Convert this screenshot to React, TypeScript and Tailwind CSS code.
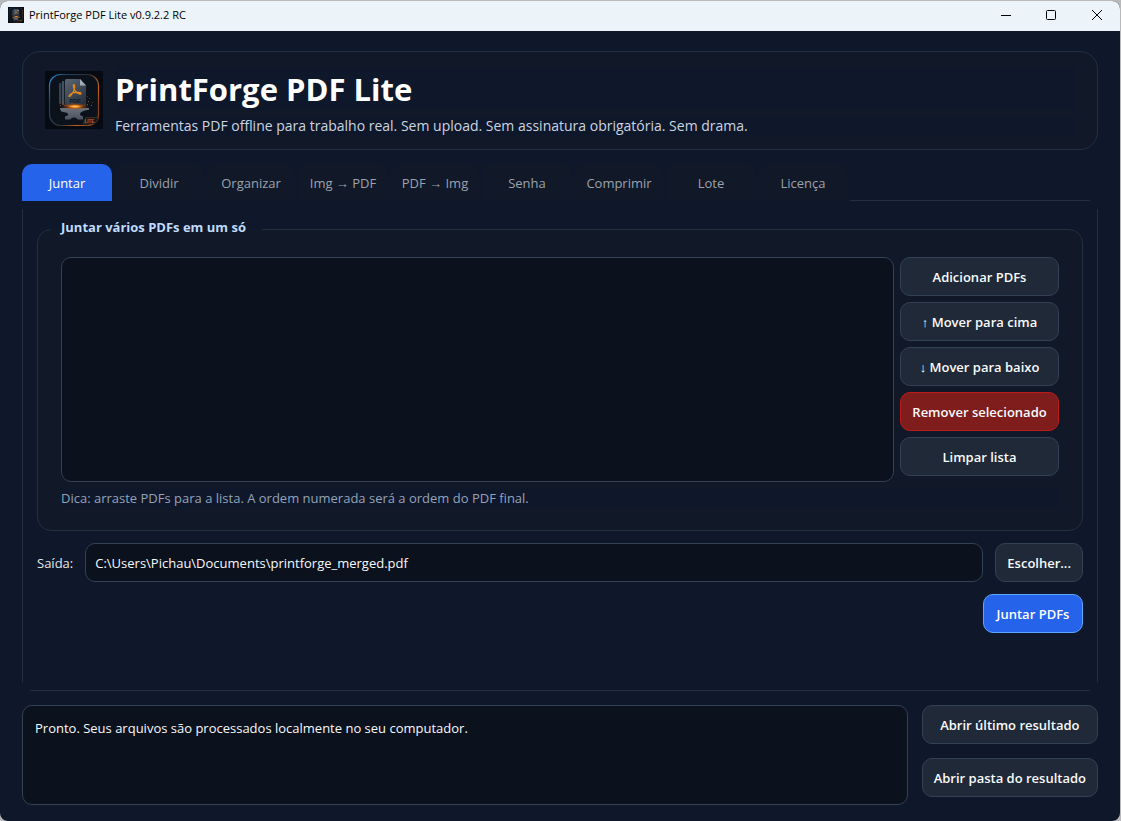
import React, { useState } from 'react'
import clsx from 'clsx'

const TABS = [
  'Juntar',
  'Dividir',
  'Organizar',
  'Img → PDF',
  'PDF → Img',
  'Senha',
  'Comprimir',
  'Lote',
  'Licença',
]

// ---------------------------------------------------------------------------
// Logo
// ---------------------------------------------------------------------------

function Logo({ id, className }: { id: string; className?: string }) {
  return (
    <svg viewBox="0 0 58 58" className={className} aria-hidden="true">
      <defs>
        <linearGradient id={`${id}-ring`} x1="0" y1="0" x2="1" y2="0.6">
          <stop offset="0" stopColor="#2a9be0" />
          <stop offset="0.25" stopColor="#1d4468" />
          <stop offset="0.6" stopColor="#33302f" />
          <stop offset="0.85" stopColor="#c4621c" />
          <stop offset="1" stopColor="#8a4418" />
        </linearGradient>
        <linearGradient id={`${id}-page`} x1="0" y1="0" x2="0.6" y2="1">
          <stop offset="0" stopColor="#5b6674" />
          <stop offset="1" stopColor="#2b333f" />
        </linearGradient>
        <linearGradient id={`${id}-anvil`} x1="0" y1="0" x2="0" y2="1">
          <stop offset="0" stopColor="#6b747e" />
          <stop offset="1" stopColor="#4a535e" />
        </linearGradient>
        <radialGradient id={`${id}-fire`}>
          <stop offset="0" stopColor="#ffd080" />
          <stop offset="0.3" stopColor="#f58a1c" />
          <stop offset="0.65" stopColor="#a8460c" stopOpacity="0.5" />
          <stop offset="1" stopColor="#a8460c" stopOpacity="0" />
        </radialGradient>
      </defs>
      <rect width="58" height="58" fill="#060a12" />
      <rect x="4.5" y="3.5" width="49" height="51" rx="11" fill="#0b121c" stroke={`url(#${id}-ring)`} strokeWidth="1.2" />
      {/* stacked pages */}
      <path d="M14 13q0-1 1-1h1.200v21H15q-1 0-1-1z" fill="#37424f" />
      <path d="M16.800 11q0-1 1-1h1.400v24h-1.400q-1 0-1-1z" fill="#465160" />
      <path
        d="M21.500 8h13.500l6 6.500v19q0 1.500-1.500 1.500h-18q-1.500 0-1.500-1.500V10q0-2 1.500-2z"
        fill={`url(#${id}-page)`}
      />
      <path d="M35 8l6 6.500h-6z" fill="#a4adb7" />
      <path
        d="M29 13.500c-1.700 0-.3 5 2.200 7.500 1.800 1.700 4.800 2.800 4.800 1.500 0-1.500-4.500-1.300-7-.8-2.500.6-5.500 2.300-5 3.500.8 1.500 4-3.200 5.300-7 .6-2 .7-4.700-.3-4.700z"
        fill="none"
        stroke="#e8891c"
        strokeWidth="1.200"
      />
      <text x="24.500" y="32" fontSize="5.500" fontWeight="700" fill="#141a23" fontFamily="Liberation Sans, sans-serif">
        PDF
      </text>
      {/* anvil */}
      <path
        d="M15 37h29v1.800q-5 .4-7.500 2.200c-2.500 1.800-2 3.500 1.500 4.500v3h-5.500q-.5-2-3.500-2t-3.500 2H20v-3c3.500-1 4-2.500 2-3.500-1.500-.8-4-.5-5.500-1.500-1-.8-1.500-2-1.500-3.500z"
        fill={`url(#${id}-anvil)`}
      />
      <ellipse cx="30" cy="35.500" rx="14" ry="3.500" fill={`url(#${id}-fire)`} />
      {/* sparks */}
      <g fill="#9c4e18">
        <path d="M17 31h1v1h-1zM15 34h1v1h-1zM43 30h1v1h-1zM42 33h1v1h-1zM46 34h1v1h-1zM44 27h.8v.8H44zM19 34h1v1h-1zM42 25h.8v.8H42zM47 31h.8v.8H47z" />
      </g>
      <path d="M41 46.500h12v2.500l-4 4H38z" fill="#17191f" stroke="#5c3a22" strokeWidth="0.600" />
      <text x="39.500" y="51.500" fontSize="4.500" fontWeight="700" fill="#c2691f" fontFamily="Liberation Sans, sans-serif">
        LITE
      </text>
    </svg>
  )
}

// ---------------------------------------------------------------------------
// Buttons
// ---------------------------------------------------------------------------

type ButtonProps = {
  children: React.ReactNode
  variant?: 'default' | 'danger' | 'primary'
}

function Button({ children, variant = 'default' }: ButtonProps) {
  return (
    <button
      type="button"
      className={clsx(
        'h-[39px] shrink-0 whitespace-nowrap rounded-[10px] border px-[11px] pt-[2px] text-[13px] font-semibold',
        variant === 'default' && 'border-[#334155] bg-[#1f2937] text-gray-50',
        variant === 'danger' && 'border-[#b91c1c] bg-[#7f1d1d] text-gray-50',
        variant === 'primary' && 'min-w-[100px] border-[#60a5fa] bg-[#2563eb] text-white',
      )}
    >
      {children}
    </button>
  )
}

// ---------------------------------------------------------------------------
// Window title bar
// ---------------------------------------------------------------------------

function TitleBar() {
  return (
    <header className="flex h-[30px] items-center bg-[#ecf4fa] pb-[2px] pl-2 text-black">
      <Logo id="bar" className="size-4" />
      <span className="ml-[5px] flex-1 text-[11px]">PrintForge PDF Lite v0.9.2.2 RC</span>
      <button type="button" aria-label="Minimizar" className="flex h-full w-11 items-center justify-center">
        <svg viewBox="0 0 10 10" className="size-[10px]" stroke="currentColor" fill="none">
          <path d="M0 5.500h10" />
        </svg>
      </button>
      <button type="button" aria-label="Maximizar" className="flex h-full w-[46px] items-center justify-center">
        <svg viewBox="0 0 10 10" className="size-[10px]" stroke="currentColor" fill="none">
          <rect x="0.500" y="0.500" width="9" height="9" rx="1" />
        </svg>
      </button>
      <button type="button" aria-label="Fechar" className="flex h-full w-[46px] items-center justify-center">
        <svg viewBox="0 0 10 10" className="size-[10px]" stroke="currentColor" fill="none">
          <path d="M0 0l10 10M10 0L0 10" />
        </svg>
      </button>
    </header>
  )
}

// ---------------------------------------------------------------------------
// Merge tab
// ---------------------------------------------------------------------------

function MergePanel() {
  const [output, setOutput] = useState('C:\\Users\\Pichau\\Documents\\printforge_merged.pdf')

  return (
    <div className="flex flex-1 flex-col gap-3 px-[14px] pt-4">
      <fieldset className="rounded-[14px] border border-[#233044] bg-[#111827] px-[13px] pb-[22px]">
        <legend className="pr-4 pb-1 pl-[10px] text-[13px] leading-5 font-bold text-[#bfdbfe]">
          Juntar vários PDFs em um só
        </legend>
        <div className="flex gap-[6px] px-[10px] pt-4">
          <ul
            aria-label="Arquivos PDF"
            className="min-h-[225px] flex-1 rounded-[10px] border border-[#334155] bg-[#0b111d]"
          />
          <div className="flex w-[159px] flex-col gap-[6px]">
            <Button>Adicionar PDFs</Button>
            <Button>↑ Mover para cima</Button>
            <Button>↓ Mover para baixo</Button>
            <Button variant="danger">Remover selecionado</Button>
            <Button>Limpar lista</Button>
          </div>
        </div>
        <p className="mx-[10px] mt-[6px] bg-[#0f172a] pt-px text-[13px] leading-[19px] text-[#94a3b8]">
          Dica: arraste PDFs para a lista. A ordem numerada será a ordem do PDF final.
        </p>
      </fieldset>

      <div className="flex items-center gap-3">
        <label htmlFor="output" className="pt-[2px] text-[13px] text-gray-200">
          Saída:
        </label>
        <input
          id="output"
          type="text"
          value={output}
          onChange={(e) => setOutput(e.target.value)}
          className="h-[39px] min-w-0 flex-1 rounded-[10px] border border-[#334155] bg-[#0b111d] px-[9px] text-[13px] text-gray-50 outline-none"
        />
        <Button>Escolher...</Button>
      </div>

      <div className="flex justify-end">
        <Button variant="primary">Juntar PDFs</Button>
      </div>
    </div>
  )
}

// ---------------------------------------------------------------------------
// App
// ---------------------------------------------------------------------------

export default function App() {
  const [active, setActive] = useState(TABS[0])

  return (
    <div className="min-h-screen bg-[#b9b9b9] pt-px pr-px font-['Open_Sans','Noto_Sans',sans-serif]">
      <div className="flex min-h-[calc(100vh-1px)] flex-col overflow-hidden rounded-lg bg-[#0f172a]">
        <TitleBar />

        <main className="flex flex-1 flex-col px-[22px] pt-5 pb-4">
          {/* App heading */}
          <section className="flex items-start gap-3 rounded-[18px] border border-[#233044] bg-[#111827] px-[22px] pt-[15px] pb-[13px]">
            <Logo id="hero" className="mt-1 size-[58px] shrink-0" />
            <div className="flex flex-1 flex-col gap-[6px]">
              <h1 className="bg-[#0f172a] pt-[2px] pb-px text-[31px] leading-10 font-bold text-white">
                PrintForge PDF Lite
              </h1>
              <p className="bg-[#0f172a] text-[14px] leading-5 text-[#cbd5e1]">
                Ferramentas PDF offline para trabalho real. Sem upload. Sem assinatura obrigatória. Sem drama.
              </p>
            </div>
          </section>

          {/* Tabs */}
          <div className="mt-[14px] flex">
            <div role="tablist" className="flex gap-[2px] pr-[2px]">
              {TABS.map((tab) => (
                <button
                  key={tab}
                  type="button"
                  role="tab"
                  aria-selected={tab === active}
                  onClick={() => setActive(tab)}
                  className={clsx(
                    'h-[37px] w-[90px] rounded-t-[10px] pt-[2px] text-[13px] whitespace-nowrap',
                    tab === active ? 'bg-[#2563eb] text-white' : 'bg-[#111827] text-[#9ca3af]',
                  )}
                >
                  {tab}
                </button>
              ))}
            </div>
            <div className="mr-2 flex-1 border-b border-[#233044]" />
          </div>

          {/* Tab pane */}
          <div role="tabpanel" className="flex flex-1">
            <div className="my-2 w-px bg-[#233044]" />
            <MergePanel />
            <div className="my-2 w-px bg-[#233044]" />
          </div>
          <div className="mx-2 h-px bg-[#233044]" />

          {/* Status log */}
          <div className="mt-[14px] flex gap-[14px]">
            <textarea
              readOnly
              aria-label="Mensagens"
              value="Pronto. Seus arquivos são processados localmente no seu computador."
              className="h-[100px] min-w-0 flex-1 resize-none rounded-[10px] border border-[#334155] bg-[#0b111d] px-3 py-3 text-[13px] leading-5 text-gray-50 outline-none"
            />
            <div className="flex flex-col gap-[14px]">
              <Button>Abrir último resultado</Button>
              <Button>Abrir pasta do resultado</Button>
            </div>
          </div>
        </main>
      </div>
    </div>
  )
}
